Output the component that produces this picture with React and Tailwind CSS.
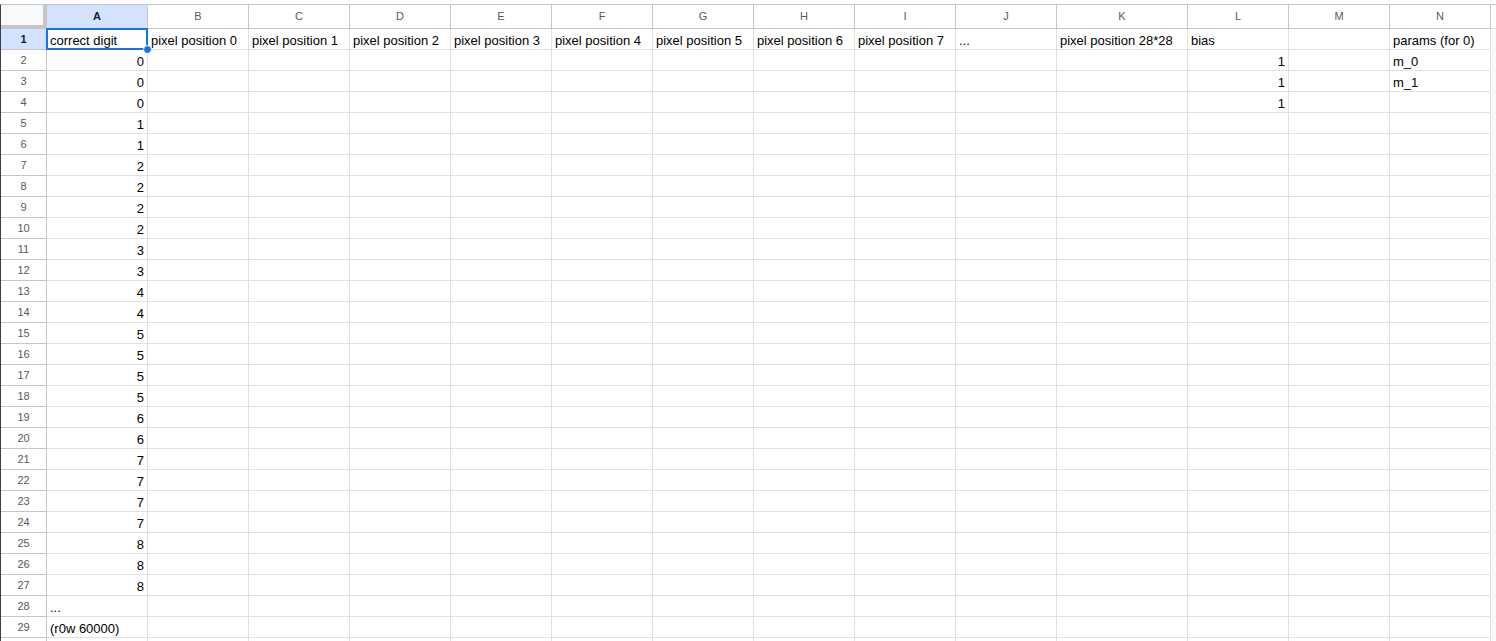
import React from "react";

const cols = ["A", "B", "C", "D", "E", "F", "G", "H", "I", "J", "K", "L", "M", "N"];
const widths = { K: "w-[131px]" };

const header = {
  A: "correct digit",
  B: "pixel position 0",
  C: "pixel position 1",
  D: "pixel position 2",
  E: "pixel position 3",
  F: "pixel position 4",
  G: "pixel position 5",
  H: "pixel position 6",
  I: "pixel position 7",
  J: "...",
  K: "pixel position 28*28",
  L: "bias",
  N: "params (for 0)",
};

const digits = [0, 0, 0, 1, 1, 2, 2, 2, 2, 3, 3, 4, 4, 5, 5, 5, 5, 6, 6, 7, 7, 7, 7, 8, 8, 8];

function rowData(r) {
  if (r === 1) return Object.fromEntries(Object.entries(header).map(([k, v]) => [k, { v }]));
  const d = {};
  if (r >= 2 && r <= 27) d.A = { v: digits[r - 2], num: true };
  if (r === 28) d.A = { v: "..." };
  if (r === 29) d.A = { v: "(r0w 60000)" };
  if (r >= 2 && r <= 4) d.L = { v: 1, num: true };
  if (r === 2) d.N = { v: "m_0" };
  if (r === 3) d.N = { v: "m_1" };
  return d;
}

function Cell({ col, cell, selected }) {
  const w = widths[col] || "w-[101px]";
  return (
    <div
      className={`${w} shrink-0 relative border-r border-b border-[#e1e1e1] px-[3px] flex items-end overflow-visible whitespace-nowrap text-[13px] leading-[17px] text-black ${
        cell && cell.num ? "justify-end" : "justify-start"
      }`}
    >
      {cell ? cell.v : ""}
      {selected && (
        <>
          <div className="absolute -left-[1px] -top-[1px] w-[102px] h-[22px] border-2 border-[#1a73e8] pointer-events-none" />
          <div className="absolute -right-[5px] -bottom-[5px] w-[9px] h-[9px] rounded-full bg-[#1a73e8] border border-white z-10" />
        </>
      )}
    </div>
  );
}

export default function App() {
  const rows = Array.from({ length: 30 }, (_, i) => i + 1);
  return (
    <div className="w-[1496px] h-[641px] overflow-hidden bg-white font-['Liberation_Sans',Arial,sans-serif]">
      <div className="h-[4px] bg-white" />
      <div className="flex border-l border-[#3c4043] border-t border-t-[#c4c7c5]">
        <div className="flex flex-col">
          {/* column header row */}
          <div className="flex h-[24px]">
            <div className="w-[46px] shrink-0 h-[24px] bg-[#f8f9fa] border-r-4 border-b-4 border-[#c4c7c5]" />
            {cols.map((c) => (
              <div
                key={c}
                className={`${widths[c] || "w-[101px]"} shrink-0 h-[24px] border-r border-b border-[#c4c7c5] flex items-center justify-center text-[11px] ${
                  c === "A" ? "bg-[#d3e3fd] font-bold text-[#0b1e3d]" : "bg-white text-[#575a5e]"
                }`}
              >
                {c}
              </div>
            ))}
          </div>
          {rows.map((r) => {
            const d = rowData(r);
            return (
              <div key={r} className="flex h-[21px]">
                <div
                  className={`w-[46px] shrink-0 border-r border-b border-[#c4c7c5] flex items-center justify-center text-[11px] ${
                    r === 1 ? "bg-[#d3e3fd] font-bold text-[#0b1e3d]" : "bg-white text-[#575a5e]"
                  }`}
                >
                  {r < 30 ? r : ""}
                </div>
                {cols.map((c) => (
                  <Cell key={c} col={c} cell={d[c]} selected={r === 1 && c === "A"} />
                ))}
              </div>
            );
          })}
        </div>
        <div className="flex-1 flex flex-col">
          <div className="h-[24px] bg-white border-b border-[#e1e1e1]" />
          <div className="flex-1 bg-[#f8f9fa]" />
        </div>
      </div>
    </div>
  );
}
